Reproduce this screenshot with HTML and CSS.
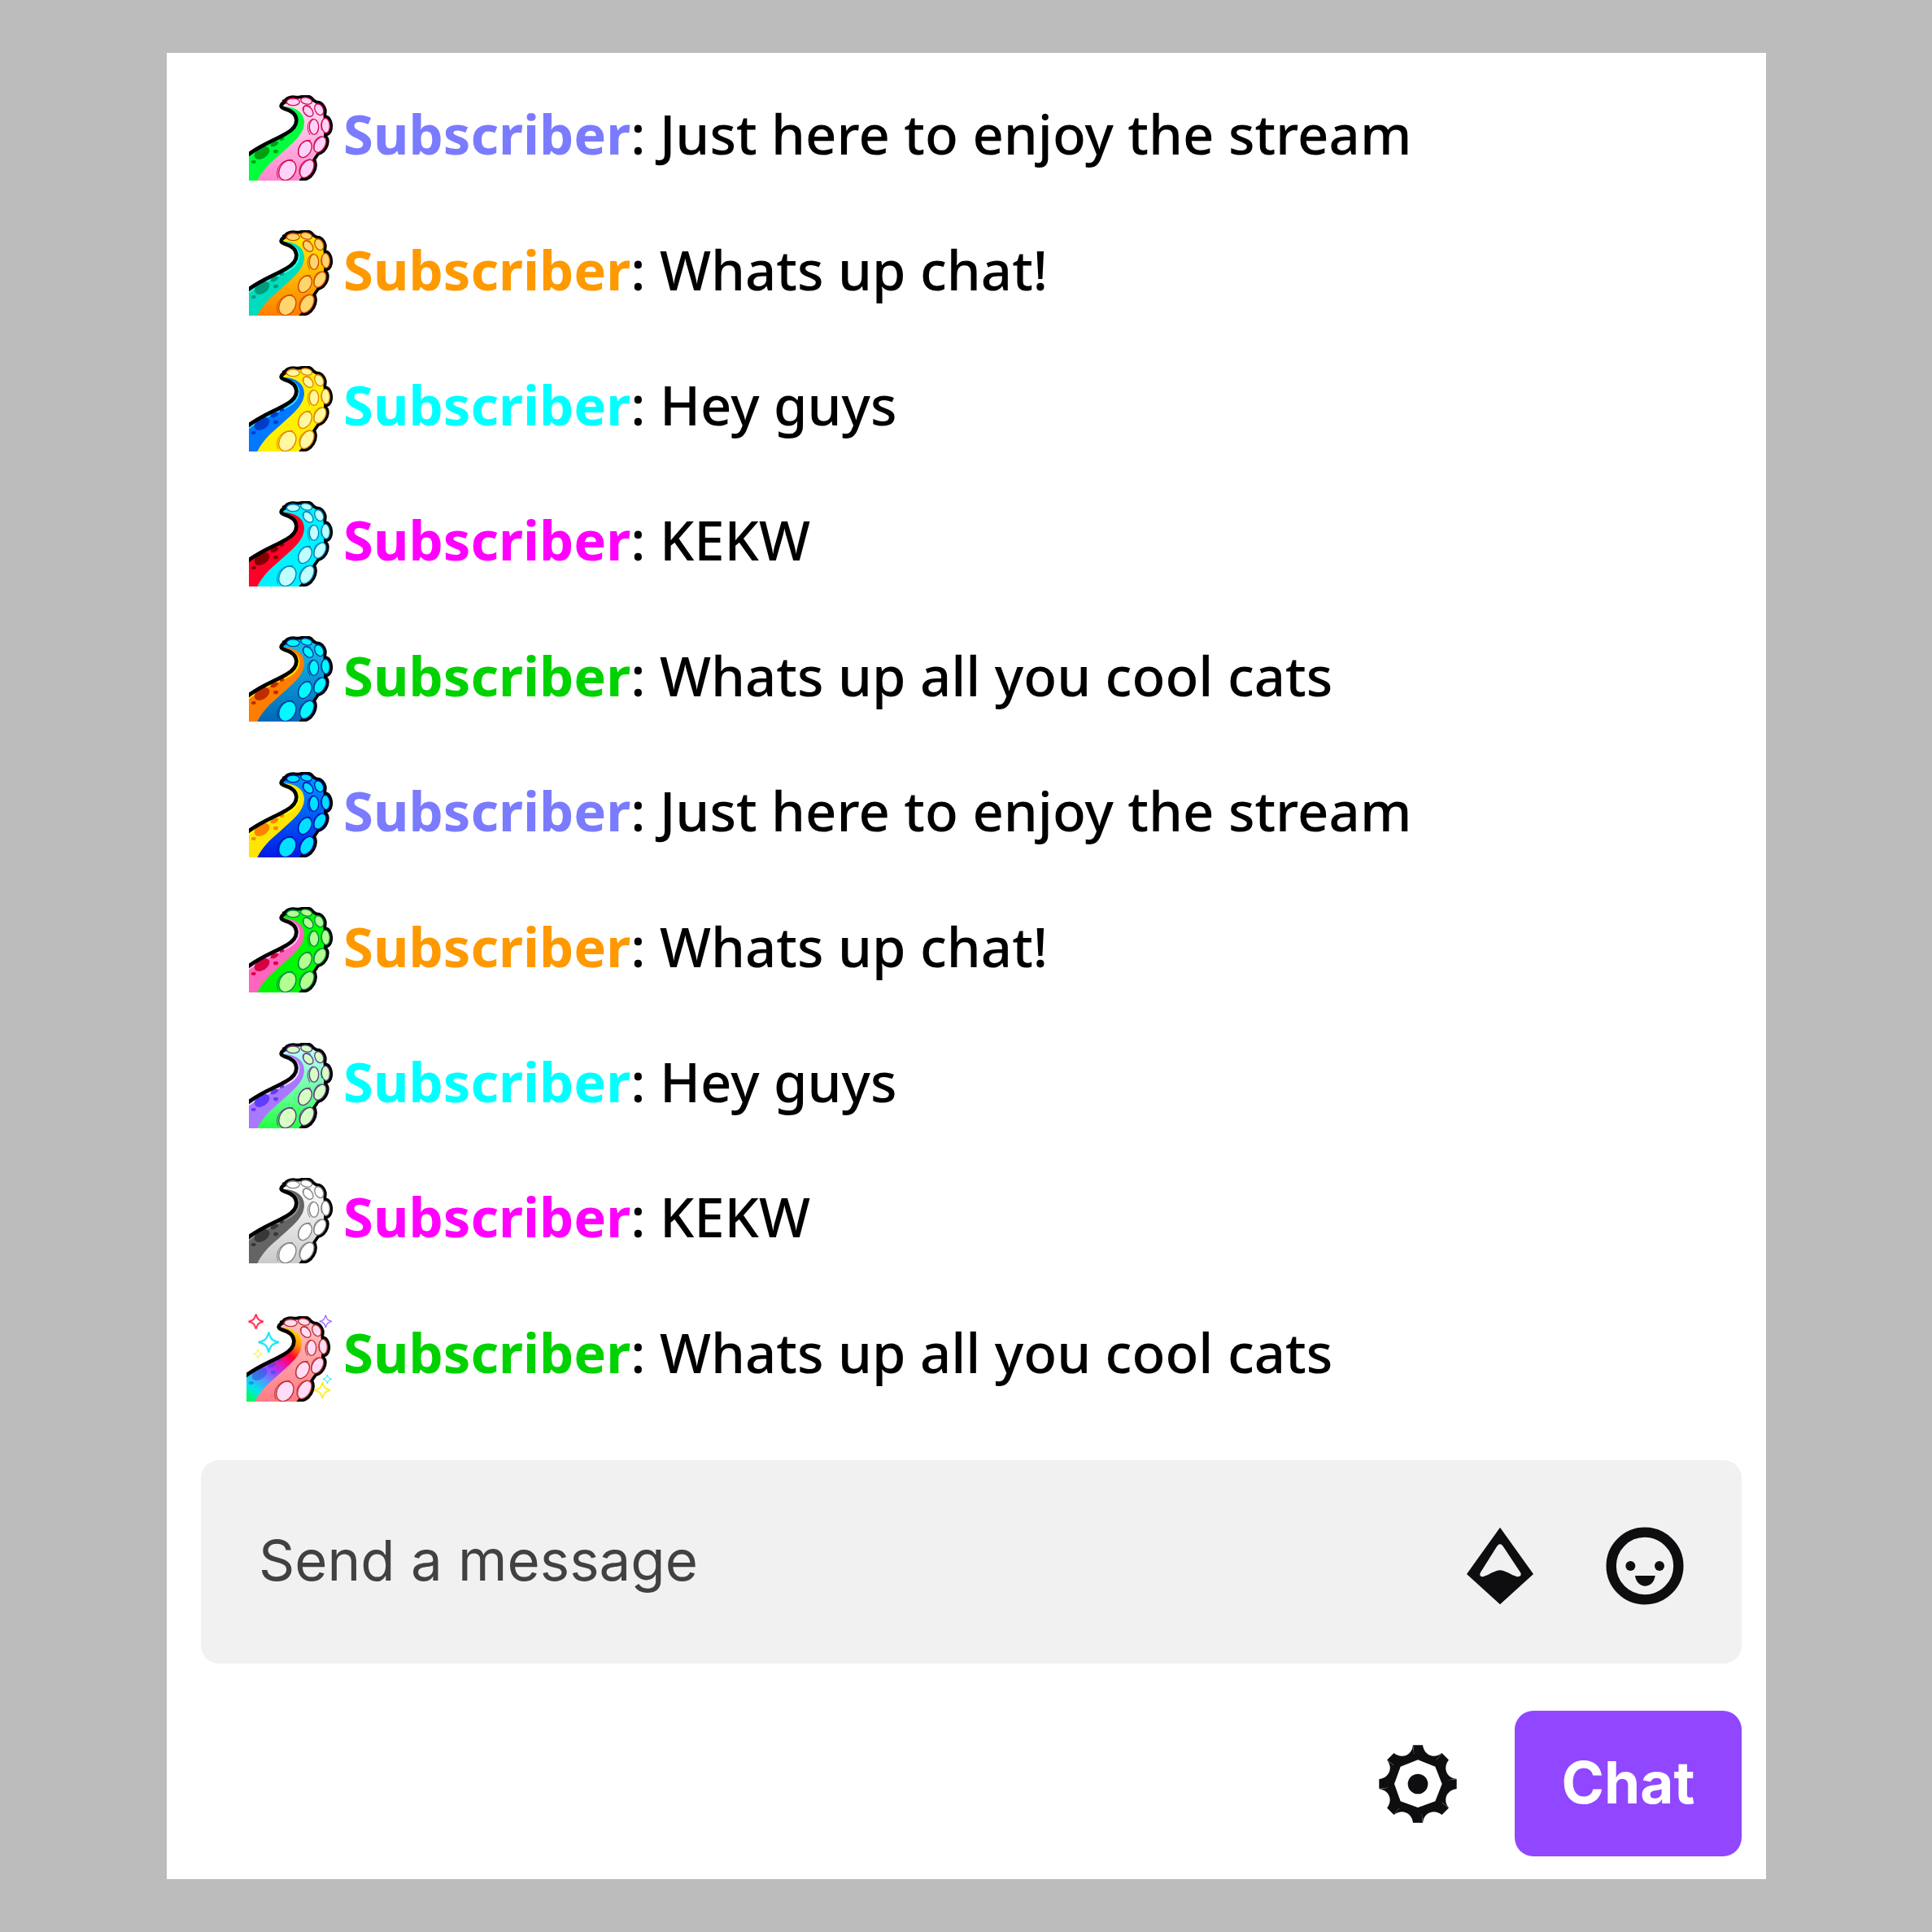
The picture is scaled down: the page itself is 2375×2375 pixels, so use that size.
FILE: index.html
```html
<!DOCTYPE html>
<html lang="en">
<head>
<meta charset="utf-8">
<meta name="viewport" content="width=device-width, initial-scale=1">
<title>Stream chat</title>
<link rel="stylesheet" href="styles.css">
</head>
<body>
<svg class="defs" aria-hidden="true" width="0" height="0">
  <defs>
    <linearGradient id="fade" x1="0" y1="0" x2="0" y2="1">
      <stop offset="0.1" stop-color="#000"/>
      <stop offset="1" stop-color="#fff"/>
    </linearGradient>
    <mask id="fade-mask" maskUnits="userSpaceOnUse" x="30" y="40" width="340" height="340">
      <rect x="30" y="40" width="340" height="340" fill="url(#fade)"/>
    </mask>
    <linearGradient id="rainbow" gradientUnits="userSpaceOnUse" x1="235" y1="95" x2="50" y2="370">
      <stop offset="0" stop-color="#ffe600"/>
      <stop offset="0.14" stop-color="#ff9a00"/>
      <stop offset="0.3" stop-color="#ff0030"/>
      <stop offset="0.42" stop-color="#ee10b0"/>
      <stop offset="0.54" stop-color="#a040ff"/>
      <stop offset="0.7" stop-color="#4aa0ff"/>
      <stop offset="0.83" stop-color="#00e8e8"/>
      <stop offset="1" stop-color="#00ff30"/>
    </linearGradient>
    <path id="body-shape" d="M38 276C90 234 145 217 186 192C213 177 224 162 223 142C221 117 202 107 180 101C166 97 162 89 174 80L211 66L262 62L300 85L322 120L326 170L322 230L284 285L262 330L226 372H38Z"/>
    <path id="star" d="M0 -27C4 -9 9 -4 27 0C9 4 4 9 0 27C-4 9 -9 4 -27 0C-9 -4 -4 -9 0 -27Z"/>
    <path id="tooth" d="M0 0L-18 -143H18C22 -106 60 -90 88 -114Z"/>
  </defs>
  <symbol id="tentacle" viewBox="48 51 312 315">
    <g class="t-outline">
      <path class="t-back" d="M174 80L211 66L262 62L300 85L322 120L326 170L322 230L284 285L262 330L226 372"/>
      <ellipse cx="211" cy="76" rx="24" ry="13"/>
      <ellipse cx="260" cy="72" rx="21" ry="12" transform="rotate(12 260 72)"/>
      <ellipse cx="307" cy="104" rx="15" ry="22" transform="rotate(-27 307 104)"/>
      <ellipse cx="331" cy="163" rx="15" ry="27" transform="rotate(-4 331 163)"/>
      <ellipse cx="310" cy="233" rx="19" ry="31" transform="rotate(30 310 233)"/>
      <ellipse cx="262" cy="322" rx="22" ry="36" transform="rotate(30 262 322)"/>
    </g>
    <use href="#body-shape" class="t-base"/>
    <use href="#body-shape" class="t-deep" mask="url(#fade-mask)"/>
    <path class="t-stripe" d="M172 93C215 92 252 112 252 152C250 198 208 228 160 272C124 303 98 326 78 368H38V276C90 234 145 217 186 192C213 177 224 162 223 142C221 117 202 105 172 93Z"/>
    <path class="t-shine" d="M40 286C95 242 150 225 191 201C219 186 233 167 232 142C229 117 208 105 184 98"/>
    <g class="t-spots">
      <ellipse cx="96" cy="264" rx="31" ry="20" transform="rotate(-34 96 264)"/>
      <ellipse cx="142" cy="231" rx="16" ry="8" transform="rotate(-25 142 231)"/>
      <ellipse cx="170" cy="213" rx="9" ry="5" transform="rotate(-20 170 213)"/>
      <ellipse cx="147" cy="258" rx="9" ry="7"/>
      <ellipse cx="65" cy="297" rx="9" ry="6" transform="rotate(-12 65 297)"/>
    </g>
    <path class="t-edge" d="M38 276C90 234 145 217 186 192C213 177 224 162 223 142C221 117 202 107 180 101C166 97 162 89 174 80L188 70"/>
    <g class="t-cups">
      <ellipse cx="211" cy="76" rx="24" ry="13"/>
      <ellipse cx="260" cy="72" rx="21" ry="12" transform="rotate(12 260 72)"/>
      <ellipse cx="266" cy="110" rx="15" ry="23" transform="rotate(-42 266 110)"/>
      <ellipse cx="307" cy="104" rx="15" ry="22" transform="rotate(-27 307 104)"/>
      <ellipse cx="288" cy="168" rx="17" ry="28"/>
      <ellipse cx="331" cy="163" rx="15" ry="27" transform="rotate(-4 331 163)"/>
      <ellipse cx="255" cy="250" rx="22" ry="33" transform="rotate(30 255 250)"/>
      <ellipse cx="310" cy="233" rx="19" ry="31" transform="rotate(30 310 233)"/>
      <ellipse cx="190" cy="328" rx="29" ry="39" transform="rotate(30 190 328)"/>
      <ellipse cx="262" cy="322" rx="22" ry="36" transform="rotate(30 262 322)"/>
    </g>
    <g class="t-arcs">
      <path d="M187 84C182 70 196 61 216 61M250 107C246 91 260 84 276 93M273 197C257 172 266 142 286 138M232 271C224 244 242 212 276 218M156 358C142 325 166 286 210 290M236 345C228 318 244 290 270 290M288 250C284 222 298 202 318 204M317 180C311 158 316 142 328 136"/>
    </g>
  </symbol>
</svg>

<main class="chat">
  <ul class="messages">
    <li class="message"><svg class="badge badge-pink" viewBox="48 51 312 315" aria-hidden="true"><use href="#tentacle" x="48" y="51" width="312" height="315"/></svg><p class="line"><b class="name violet">Subscriber</b>: Just here to enjoy the stream</p></li>
    <li class="message"><svg class="badge badge-orange" viewBox="48 51 312 315" aria-hidden="true"><use href="#tentacle" x="48" y="51" width="312" height="315"/></svg><p class="line"><b class="name orange">Subscriber</b>: Whats up chat!</p></li>
    <li class="message"><svg class="badge badge-yellow" viewBox="48 51 312 315" aria-hidden="true"><use href="#tentacle" x="48" y="51" width="312" height="315"/></svg><p class="line"><b class="name cyan">Subscriber</b>: Hey guys</p></li>
    <li class="message"><svg class="badge badge-red" viewBox="48 51 312 315" aria-hidden="true"><use href="#tentacle" x="48" y="51" width="312" height="315"/></svg><p class="line"><b class="name magenta">Subscriber</b>: KEKW</p></li>
    <li class="message"><svg class="badge badge-ocean" viewBox="48 51 312 315" aria-hidden="true"><use href="#tentacle" x="48" y="51" width="312" height="315"/></svg><p class="line"><b class="name green">Subscriber</b>: Whats up all you cool cats</p></li>
    <li class="message"><svg class="badge badge-blue" viewBox="48 51 312 315" aria-hidden="true"><use href="#tentacle" x="48" y="51" width="312" height="315"/></svg><p class="line"><b class="name violet">Subscriber</b>: Just here to enjoy the stream</p></li>
    <li class="message"><svg class="badge badge-lime" viewBox="48 51 312 315" aria-hidden="true"><use href="#tentacle" x="48" y="51" width="312" height="315"/></svg><p class="line"><b class="name orange">Subscriber</b>: Whats up chat!</p></li>
    <li class="message"><svg class="badge badge-lilac" viewBox="48 51 312 315" aria-hidden="true"><use href="#tentacle" x="48" y="51" width="312" height="315"/></svg><p class="line"><b class="name cyan">Subscriber</b>: Hey guys</p></li>
    <li class="message"><svg class="badge badge-grey" viewBox="48 51 312 315" aria-hidden="true"><use href="#tentacle" x="48" y="51" width="312" height="315"/></svg><p class="line"><b class="name magenta">Subscriber</b>: KEKW</p></li>
    <li class="message"><svg class="badge badge-rainbow" viewBox="48 51 312 315" aria-hidden="true">
      <use href="#tentacle" x="39" y="63" width="312" height="315"/>
      <g class="stars">
        <use href="#star" class="star-red" transform="translate(74 83)"/>
        <use href="#star" class="star-cyan" transform="translate(121 159) scale(1.4)"/>
        <use href="#star" class="star-yellow" transform="translate(81 202) scale(.6)"/>
        <use href="#star" class="star-purple" transform="translate(331 82) scale(.85)"/>
        <use href="#star" class="star-cyan" transform="translate(337 295) scale(.6)"/>
        <use href="#star" class="star-yellow" transform="translate(319 336) scale(1.1)"/>
      </g>
    </svg><p class="line"><b class="name green">Subscriber</b>: Whats up all you cool cats</p></li>
  </ul>

  <form class="composer">
    <div class="field">
      <input class="field-input" type="text" placeholder="Send a message" aria-label="Send a message">
      <div class="field-tools">
        <button class="icon-button" type="button" aria-label="Bits">
          <svg width="82" height="96" viewBox="0 0 246 288"><path fill="#0e0e10" fill-rule="evenodd" d="M123 2L246 174L123 286L0 174ZM123 64C117 64 113 70 109 76L51 168C46 177 50 186 62 183C84 177 104 160 123 160C142 160 162 177 184 183C196 186 204 178 198 168L137 76C133 70 129 64 123 64Z"/></svg>
        </button>
        <button class="icon-button" type="button" aria-label="Emotes">
          <svg width="96" height="96" viewBox="0 0 288 288"><circle cx="144" cy="144" r="124" fill="none" stroke="#0e0e10" stroke-width="37"/><circle cx="91" cy="144" r="18" fill="#0e0e10"/><circle cx="198" cy="144" r="18" fill="#0e0e10"/><path fill="#0e0e10" d="M108 180H182C179 204 163 218 145 218S111 204 108 180Z"/></svg>
        </button>
      </div>
    </div>
    <div class="actions">
      <button class="icon-button" type="button" aria-label="Chat settings">
        <svg width="96" height="96" viewBox="-144 -144 288 288" fill="#0e0e10"><circle r="112"/><use href="#tooth"/><use href="#tooth" transform="rotate(45)"/><use href="#tooth" transform="rotate(90)"/><use href="#tooth" transform="rotate(135)"/><use href="#tooth" transform="rotate(180)"/><use href="#tooth" transform="rotate(225)"/><use href="#tooth" transform="rotate(270)"/><use href="#tooth" transform="rotate(315)"/><path fill="#fff" d="M0 -89L64 -64L89 0L64 64L0 87L-64 64L-87 0L-64 -64Z"/><circle r="37"/></svg>
      </button>
      <button class="send" type="submit">Chat</button>
    </div>
  </form>
</main>
</body>
</html>
```
FILE: styles.css
```css
* {
  box-sizing: border-box;
}

body {
  margin: 0;
  padding: 65px 204px 65px 205px;
  background: #bcbcbc;
  font-family: "Noto Sans", "Open Sans", sans-serif;
}

.defs {
  position: absolute;
}

.chat {
  padding: 21px 30px 28px 42px;
  background: #fff;
}

/* Message list */
.messages {
  display: flex;
  flex-direction: column;
  min-height: 1664px;
  margin: 0;
  padding: 0 0 0 59px;
  list-style: none;
}

.message {
  display: flex;
  flex: 1;
  align-items: center;
  gap: 12px;
}

.line {
  margin: 0;
  padding-bottom: 10px;
  font-size: 67px;
  font-weight: 500;
  line-height: 84px;
  color: #000;
}

.name {
  font-weight: 700;
}

.violet { color: #7b7bff; }
.orange { color: #ff9900; }
.cyan { color: #00ffff; }
.magenta { color: #ff00ff; }
.green { color: #00d200; }

/* Tentacle badges */
.badge {
  flex: none;
  width: 104px;
  height: 105px;
  overflow: visible;
}

.t-outline {
  fill: #000;
  stroke: #000;
  stroke-width: 23;
  stroke-linejoin: round;
}

.t-back { fill: none; }

.t-base { fill: var(--base); }
.t-deep { fill: var(--deep); }
.t-stripe { fill: var(--stripe); }
.t-spots { fill: var(--spot); }

.t-shine {
  fill: none;
  stroke: var(--shine);
  stroke-width: 6;
}

.t-edge {
  fill: none;
  stroke: #000;
  stroke-width: 14;
  stroke-linejoin: round;
}

.t-cups {
  fill: var(--cup);
  stroke: var(--rim);
  stroke-width: 4;
}

.t-arcs {
  fill: none;
  stroke: var(--rim);
  stroke-width: 3;
}

.badge-pink { --base: #ffe0f4; --deep: #ff80cc; --stripe: #00ff3c; --shine: #00ff3c; --spot: #00a014; --cup: #ffd2f8; --rim: #d00a50; }
.badge-orange { --base: #ffee00; --deep: #ff7800; --stripe: #00dcbe; --shine: #28ffe6; --spot: #009c7c; --cup: #ffd56e; --rim: #d24b00; }
.badge-yellow { --base: #fff000; --deep: #ffee00; --stripe: #0078ff; --shine: #28d8ff; --spot: #003cc8; --cup: #fff8a0; --rim: #e68200; }
.badge-red { --base: #00f5ff; --deep: #00f0ff; --stripe: #ff0028; --shine: #ff0028; --spot: #820000; --cup: #beffff; --rim: #0082be; }
.badge-ocean { --base: #14beeb; --deep: #0064b4; --stripe: #ff7d00; --shine: #ffdc00; --spot: #be2d00; --cup: #00faff; --rim: #0a3ca0; }
.badge-blue { --base: #0096ff; --deep: #0014e6; --stripe: #ffe600; --shine: #ffff00; --spot: #ff8200; --cup: #00e1ff; --rim: #0014b4; }
.badge-lime { --base: #00ff00; --deep: #00f500; --stripe: #ff64be; --shine: #ffbeeb; --spot: #d70041; --cup: #b4ff91; --rim: #008c46; }
.badge-lilac { --base: #b9ffff; --deep: #1eff3c; --stripe: #aa78ff; --shine: #f0d2ff; --spot: #5f3cff; --cup: #d7ffc3; --rim: #5f3c82; }
.badge-grey { --base: #ffffff; --deep: #c8c8c8; --stripe: #646464; --shine: #8c8c8c; --spot: #373737; --cup: #ffffff; --rim: #828282; }
.badge-rainbow { --base: #ffc0c4; --deep: #ff7882; --stripe: url(#rainbow); --shine: transparent; --spot: #1e50d280; --cup: #ffdcf8; --rim: #be322d; }

.stars {
  fill: #fff;
  stroke-width: 5;
}

.star-red { stroke: #ff2850; filter: drop-shadow(0 0 5px #ff78a0); }
.star-cyan { stroke: #28e6fa; }
.star-yellow { stroke: #ffee14; }
.star-purple { stroke: #9b6eff; }

/* Composer */
.composer {
  display: flex;
  flex-direction: column;
  gap: 58px;
  margin-top: 45px;
}

.field {
  display: flex;
  align-items: center;
  height: 250px;
  padding: 0 71px;
  border-radius: 22px;
  background: #f1f1f1;
}

.field-input {
  flex: 1;
  min-width: 0;
  height: 120px;
  padding: 0 0 4px;
  border: 0;
  outline: 0;
  background: none;
  font: 400 69px Inter, sans-serif;
  color: #0e0e10;
}

.field-input::placeholder {
  color: #414143;
  opacity: 1;
}

.field-tools {
  display: flex;
  gap: 89px;
  padding-top: 10px;
}

.icon-button {
  display: flex;
  padding: 0;
  border: 0;
  background: none;
}

.actions {
  display: flex;
  align-items: center;
  justify-content: flex-end;
  gap: 71px;
}

.send {
  width: 279px;
  height: 179px;
  padding: 0 0 4px;
  border: 0;
  border-radius: 23px;
  background: #9146ff;
  font: 700 71px Inter, sans-serif;
  color: #fff;
}
```
